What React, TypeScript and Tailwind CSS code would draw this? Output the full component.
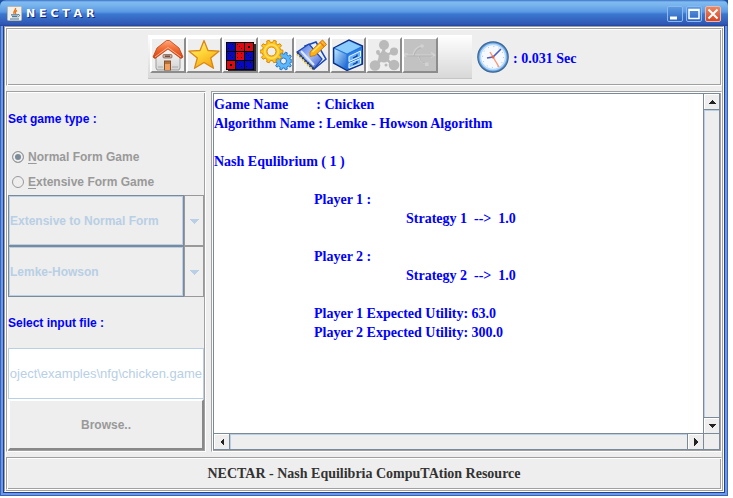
import type { ReactNode } from 'react';

const ETCHED =
  'border border-t-[#a0a0a0] border-l-[#a0a0a0] border-b-white border-r-white p-px shadow-[inset_1px_1px_0_#fff,inset_-1px_-1px_0_#a0a0a0]';
const SERIF = "font-['Liberation_Serif',serif] font-bold text-[14px] leading-[19px]";
const SANS = "font-['Liberation_Sans',sans-serif] text-[12px]";

function JavaIcon() {
  return (
    <svg width="16" height="16" viewBox="0 0 16 16" aria-hidden="true">
      <rect x="0.5" y="0.5" width="14" height="14" rx="1" fill="#f0f0ec" stroke="#b8b8b0" />
      <path d="M8.5 2C9.5 4 5.5 5 7 8M10 4.5C8 5.5 8 6.5 8.8 8" fill="none" stroke="#e8761e" strokeWidth="1.4" />
      <path d="M4 8.8h7M5 10.6h5M3 13h9" stroke="#4d7896" strokeWidth="1.2" />
      <path d="M11 8.6c2.5-.4 2 2-.6 2.4" fill="none" stroke="#4d7896" />
    </svg>
  );
}

function HomeIcon() {
  return (
    <svg width="32" height="32" viewBox="0 0 32 32" className="shrink-0" aria-hidden="true">
      <defs>
        <linearGradient id="roof" x1="0" y1="0" x2="0" y2="1">
          <stop offset="0" stopColor="#ffa87c" />
          <stop offset="0.4" stopColor="#f4743c" />
          <stop offset="1" stopColor="#d83c0c" />
        </linearGradient>
        <linearGradient id="wall" x1="0" y1="0" x2="0" y2="1">
          <stop offset="0" stopColor="#ffffff" />
          <stop offset="1" stopColor="#d4d4d4" />
        </linearGradient>
      </defs>
      <path d="M4 15 16 5l12 10v14l-1 2H5l-1-2z" fill="url(#wall)" stroke="#9c9c9c" />
      <path d="M14.500 1.500h3L27 9l4 9-2 1.500L16 10 3 19.500 1 18l4-9z" fill="url(#roof)" stroke="#b8400f" strokeWidth="0.8" />
      <path d="M3 18 16 8.500 29 18" fill="none" stroke="#ffc4a4" strokeWidth="0.8" />
      <rect x="11" y="15.500" width="9" height="3.500" rx="1" fill="#c9b0a0" stroke="#7c5544" strokeWidth="0.7" />
      <path d="M13 17.200h5" stroke="#5c3828" strokeWidth="1.2" />
      <rect x="12.500" y="22" width="6" height="9" fill="#b87035" stroke="#84512c" />
      <path d="M13 25h5v6h-5z" fill="#f0a060" />
      <path d="M6 28h5M20 28h6" stroke="#a8a8a8" />
    </svg>
  );
}

function StarIcon() {
  return (
    <svg width="32" height="32" viewBox="0 0 32 32" className="shrink-0" aria-hidden="true">
      <defs>
        <linearGradient id="star" x1="0" y1="0" x2="0.6" y2="1">
          <stop offset="0" stopColor="#fff6a0" />
          <stop offset="0.5" stopColor="#ffd83c" />
          <stop offset="1" stopColor="#f7a814" />
        </linearGradient>
      </defs>
      <path
        d="M16 1.500 20 11.500 31 12.200 22.700 19 25.500 29.300 16 23.500 6.500 29.300 9.300 19 1 12.200 12 11.500z"
        fill="url(#star)"
        stroke="#d98714"
        strokeWidth="1.3"
        strokeLinejoin="round"
      />
    </svg>
  );
}

const DICE = ['b2', 'r3', 'r1', 'b3', 'r4', 'b3', 'r1', 'b3', 'b2'];
const PIPS: Record<string, number[][]> = {
  '1': [[3, 3]],
  '2': [[5, 1], [1, 5]],
  '3': [[1, 1], [3, 3], [5, 5]],
  '4': [[1, 1], [5, 1], [1, 5], [5, 5]],
};

function DiceIcon() {
  return (
    <svg width="32" height="32" viewBox="0 0 32 32" shapeRendering="crispEdges" className="shrink-0" aria-hidden="true">
      <path d="M4 5h28v27H4z" fill="#2a2a2a" />
      <rect x="2" y="3" width="28" height="28" fill="#000" />
      {DICE.map((die, i) => (
        <g key={i} transform={`translate(${3 + (i % 3) * 9} ${4 + Math.floor(i / 3) * 9})`}>
          <rect width="8" height="8" fill={die[0] === 'b' ? '#0808c0' : '#e00810'} />
          {PIPS[die[1]].map(([x, y]) => (
            <rect key={`${x}-${y}`} x={x} y={y} width={die[1] === '1' ? 2 : 1} height={die[1] === '1' ? 2 : 1} fill="#000" />
          ))}
        </g>
      ))}
    </svg>
  );
}

function gearPath(cx: number, cy: number, outer: number, inner: number, teeth: number) {
  const points: string[] = [];
  for (let i = 0; i < teeth; i += 1) {
    [-0.3, -0.18, 0.18, 0.3].forEach((offset, k) => {
      const angle = ((i + offset) / teeth) * Math.PI * 2;
      const radius = k === 0 || k === 3 ? inner : outer;
      points.push(`${(cx + Math.cos(angle) * radius).toFixed(2)} ${(cy + Math.sin(angle) * radius).toFixed(2)}`);
    });
  }
  return `M${points.join('L')}z`;
}

function hole(cx: number, cy: number, r: number) {
  return `M${cx - r} ${cy}a${r} ${r} 0 1 0 ${2 * r} 0a${r} ${r} 0 1 0 ${-2 * r} 0z`;
}

function GearsIcon() {
  return (
    <svg width="32" height="32" viewBox="0 0 32 32" fillRule="evenodd" strokeLinejoin="round" className="shrink-0" aria-hidden="true">
      <path d={gearPath(23.5, 22, 9, 7, 10) + hole(23.5, 22, 3)} fill="#5cb8f8" stroke="#2878c8" />
      <path d={gearPath(11.5, 12.5, 11.5, 9.2, 10) + hole(11.5, 12.5, 4.5)} fill="#ffc41c" stroke="#d88a08" />
      <circle cx="11.5" cy="12.500" r="6.800" fill="none" stroke="#ffe068" strokeWidth="1.5" />
    </svg>
  );
}

function NotebookIcon() {
  return (
    <svg width="32" height="32" viewBox="0 0 32 32" className="shrink-0" aria-hidden="true">
      <defs>
        <linearGradient id="note" x1="0" y1="0" x2="1" y2="1">
          <stop offset="0" stopColor="#3c64d8" />
          <stop offset="0.5" stopColor="#a8c0fc" />
          <stop offset="1" stopColor="#2c50c0" />
        </linearGradient>
      </defs>
      <path d="M9 7 20 3l10 17-12 10z" fill="#e8f0ff" stroke="#1c48b4" strokeWidth="1.5" />
      <path d="M1 13 13 5l13 15-8 10z" fill="url(#note)" stroke="#1c44b0" strokeWidth="1.2" />
      <path d="m5 12 13 14" stroke="#dce8ff" strokeWidth="2" />
      <path d="m1.500 14 16 16" stroke="#3c3c30" strokeWidth="2.500" strokeDasharray="1.3 2.2" />
      <path d="m1 15.500 15 15" stroke="#f0cc30" strokeWidth="1.4" strokeDasharray="1.8 1.8" />
      <path d="m14 13 12.500-12 4 4.500-11.500 11-5 1z" fill="#ffb218" stroke="#c87c10" />
      <path d="m16.500 13 10-9.500" stroke="#ffe468" strokeWidth="1.5" />
      <path d="m24 3 4 4.500" stroke="#ec7820" strokeWidth="1.5" />
    </svg>
  );
}

function CabinetIcon() {
  return (
    <svg width="32" height="32" viewBox="0 0 32 32" className="shrink-0" aria-hidden="true">
      <defs>
        <linearGradient id="side" x1="0" y1="0" x2="1" y2="1">
          <stop offset="0" stopColor="#c0e8ff" />
          <stop offset="1" stopColor="#1662d0" />
        </linearGradient>
      </defs>
      <path d="m1.500 9 15.500-8 13.500 6v18L15 31.500 1.500 24z" fill="#2474e0" stroke="#0c2c80" strokeWidth="1.3" />
      <path d="m3 9 14-7 12 5.500-14 7z" fill="#8cccfc" />
      <path d="m2.500 10 12 5.500v14.500l-12-6.500z" fill="url(#side)" />
      <path d="m16 15.500 13.500-6.500v15L16 30z" fill="#2e80e4" />
      <path d="m17 17.500 11.500-5.500v5.500L17 22.500zM17 24.500l11.500-5v5L17 29z" fill="#68b0f8" stroke="#e8f6ff" />
      <path d="m21 19 4-2v-1.500M21 25.500l4-2V22" fill="none" stroke="#0c3c98" strokeWidth="1.300" />
    </svg>
  );
}

function MoleculeIcon() {
  return (
    <svg width="32" height="32" viewBox="0 0 32 32" fill="#bababa" className="shrink-0" aria-hidden="true">
      <path d="M16 7v11L7 27M16 18l10 9M16 18l10-6M16 18l-7-4" stroke="#bababa" strokeWidth="2.500" />
      <circle cx="16" cy="6" r="5" />
      <circle cx="26" cy="12.500" r="4" />
      <circle cx="16" cy="18" r="5.500" />
      <circle cx="7" cy="26.500" r="5.300" />
      <circle cx="26" cy="26" r="5.300" />
      <circle cx="10" cy="13" r="2" />
      <circle cx="18" cy="26" r="1.5" />
    </svg>
  );
}

function BranchIcon() {
  return (
    <svg width="34" height="34" viewBox="0 0 34 34" className="shrink-0" aria-hidden="true">
      <rect width="34" height="34" fill="#c2c2c2" />
      <g fill="none" stroke="#d4d4d4" strokeWidth="1.2">
        <path d="M2 17h29M28 14.500l4 2.500-4 2.500M10 17c1-5 4-8 8-9M15 17c2 6 4 8 8 9" />
        <circle cx="3" cy="17" r="1.5" />
      </g>
      <path d="M3 18h27M11 18c1-5 4-8 7-8M16 18c2 6 4 7 7 7" fill="none" stroke="#b4b4b4" />
      <circle cx="19" cy="8" r="1.800" fill="#d2d2d2" />
      <path d="M22 24.500h3.500V28H22z" fill="#d2d2d2" />
    </svg>
  );
}

function ClockIcon() {
  return (
    <svg width="32" height="32" viewBox="0 0 32 32" aria-hidden="true">
      <circle cx="16" cy="16" r="15.200" fill="#5a9ce0" stroke="#3f6690" strokeWidth="1.2" />
      <circle cx="16" cy="16" r="13.500" fill="#b4d8fa" />
      <circle cx="16" cy="16" r="11.800" fill="#f6faff" />
      <circle cx="16" cy="16" r="10.500" fill="none" stroke="#a8b8cc" strokeDasharray="1 4.500" />
      <path d="m13 11 9 15" stroke="#ff9470" strokeWidth="1.4" />
      <path d="m10 17 6-1 8-8" fill="none" stroke="#4a5cc0" strokeWidth="1.6" />
      <circle cx="16" cy="16" r="1.5" fill="#e06848" />
    </svg>
  );
}

function ToolButton({ label, disabled, children }: { label: string; disabled?: boolean; children: ReactNode }) {
  return (
    <button
      type="button"
      aria-label={label}
      disabled={disabled}
      className="flex h-[36px] w-[36px] items-center justify-center overflow-hidden border-2 border-t-white border-l-white border-r-[#8c8c8c] border-b-[#8c8c8c] bg-[#eee]"
    >
      {children}
    </button>
  );
}

function WindowButton({ label, danger, children }: { label: string; danger?: boolean; children: ReactNode }) {
  return (
    <button
      type="button"
      aria-label={label}
      className={`flex h-[16px] w-[16px] items-center justify-center rounded-[2px] border ${
        danger
          ? 'border-[#e8b8b4] bg-linear-to-b from-[#e88860] to-[#d84420]'
          : 'border-[#8cb8ee] bg-linear-to-b from-[#5c9ae0] to-[#2c62c0]'
      }`}
    >
      <svg width="12" height="12" viewBox="0 0 12 12" fill="none" stroke="#fff" strokeWidth="2" aria-hidden="true">
        {children}
      </svg>
    </button>
  );
}

function Arrow({ d, fill = '#222' }: { d: string; fill?: string }) {
  return (
    <svg width="10" height="10" viewBox="0 0 10 10" shapeRendering="crispEdges" aria-hidden="true">
      <path d={d} fill={fill} />
    </svg>
  );
}

function Combo({ label, value }: { label: string; value: string }) {
  return (
    <div className="flex border border-[#999]">
      <select
        aria-label={label}
        disabled
        className="-m-px min-w-0 flex-1 appearance-none border border-[#7a8a99] bg-[#eee] pl-px font-bold text-[#b8cfe5] opacity-100 shadow-[inset_0_0_0_1px_#b8cfe5]"
      >
        <option>{value}</option>
      </select>
      <span className="ml-px flex w-[19px] items-center justify-center border-l border-[#999]">
        <Arrow d="M0 3h10L5 8z" fill="#b8cfe5" />
      </span>
    </div>
  );
}

function GameTypeRadio({ label, checked }: { label: string; checked?: boolean }) {
  return (
    <label className="flex flex-1 items-center gap-[4px] pl-[4px] font-bold text-[#999]">
      <input
        type="radio"
        name="game-type"
        disabled
        defaultChecked={checked}
        className="h-[12px] w-[12px] appearance-none rounded-full border border-[#999] checked:bg-[#7a8a99] checked:shadow-[inset_0_0_0_2px_#eee]"
      />
      <span>
        <u className="underline-offset-2">{label[0]}</u>
        {label.slice(1)}
      </span>
    </label>
  );
}

const SCROLL_BUTTON = 'flex h-[15px] w-[15px] shrink-0 items-center justify-center bg-[#eee] shadow-[inset_1px_1px_0_#fff]';

export default function App() {
  return (
    <div className="flex min-h-screen bg-white pr-[5px] pb-[2px]">
      <div className="flex min-w-0 flex-1 flex-col bg-[#1c50a4]">
        <header className="z-10 flex h-[26px] shrink-0 items-center gap-[3px] rounded-t-[6px] bg-[linear-gradient(#3c70c8_0px,#80bcf0_2px,#78b4ec_5px,#5a98e4_12px,#3c78d0_14px,#2f58b4_24px,#2444a0_26px)] px-[7px] pt-[2px]">
          <JavaIcon />
          <h1 className="flex-1 font-['DejaVu_Sans',sans-serif] text-[11px] font-bold whitespace-pre text-white [text-shadow:1px_1px_0_#10288c]">
            N E C T A R
          </h1>
          <WindowButton label="Minimize">
            <path d="M1 10h7" strokeWidth="3" />
          </WindowButton>
          <WindowButton label="Maximize">
            <path d="M1 1.500h10v9H1z" strokeWidth="1.5" />
            <path d="M1 2h10" />
          </WindowButton>
          <WindowButton label="Close" danger>
            <path d="m1.500 1.500 9 9M10.500 1.500l-9 9" />
          </WindowButton>
        </header>

        <div className="mx-[4px] mb-[4px] flex flex-1 flex-col bg-[#eee] shadow-[0_0_0_1px_#1c3f9a,0_0_0_3px_#6f9ae0,0_0_0_4px_#3463c0]">
          <div className={`flex flex-1 flex-col gap-[5px] ${ETCHED}`}>
            <section className={`flex h-[58px] items-center justify-center gap-[5px] ${ETCHED}`}>
              <div
                role="toolbar"
                aria-label="Tools"
                className="flex h-[44px] w-[324px] items-start border-b border-[#c4c4c4] bg-linear-to-b from-white to-[#d8d8d8] px-[2px] pt-[2px]"
              >
                <ToolButton label="Home"><HomeIcon /></ToolButton>
                <ToolButton label="Favourites"><StarIcon /></ToolButton>
                <ToolButton label="Games"><DiceIcon /></ToolButton>
                <ToolButton label="Settings"><GearsIcon /></ToolButton>
                <ToolButton label="Edit"><NotebookIcon /></ToolButton>
                <ToolButton label="Files"><CabinetIcon /></ToolButton>
                <ToolButton label="Network" disabled><MoleculeIcon /></ToolButton>
                <ToolButton label="Tree" disabled><BranchIcon /></ToolButton>
              </div>
              <div className="flex items-center gap-[4px]">
                <ClockIcon />
                <span className={`min-w-[67px] pt-[2px] whitespace-nowrap text-[#0000ff] ${SERIF}`}>: 0.031 Sec</span>
              </div>
            </section>

            <div className="flex flex-1 gap-[5px]">
              <form className={`grid w-[200px] shrink-0 auto-rows-fr ${ETCHED} ${SANS}`}>
                <h2 className="flex items-center font-bold text-[#0000ff]">Set game type :</h2>
                <div className="flex flex-col">
                  <GameTypeRadio label="Normal Form Game" checked />
                  <GameTypeRadio label="Extensive Form Game" />
                </div>
                <Combo label="Conversion" value="Extensive to Normal Form" />
                <Combo label="Algorithm" value="Lemke-Howson" />
                <label htmlFor="input-file" className="flex items-center font-bold text-[#0000ff]">
                  Select input file :
                </label>
                <input
                  id="input-file"
                  dir="rtl"
                  disabled
                  defaultValue="Project\examples\nfg\chicken.game"
                  className="min-h-[51px] w-full min-w-0 border border-[#b8cfe5] bg-white px-px text-[13px] text-[#b8cfe5]"
                />
                <button
                  type="button"
                  disabled
                  className="border-2 border-t-white border-l-white border-r-[#888] border-b-[#888] bg-[#eee] font-bold text-[#999]"
                >
                  Browse..
                </button>
              </form>

              <section className={`flex min-w-0 flex-1 ${ETCHED}`}>
                <div className="flex min-w-0 flex-1 flex-col border border-[#7a8a99]">
                  <div className="flex flex-1">
                    <div className={`min-w-0 flex-1 overflow-hidden bg-white pt-px whitespace-pre text-[#0000ff] ${SERIF}`}>
                      <p>{'Game Name        : Chicken'}</p>
                      <p>Algorithm Name : Lemke - Howson Algorithm</p>
                      <p className="mt-[19px]">Nash Equlibrium ( 1 )</p>
                      <p className="mt-[19px] pl-[100px]">Player 1 :</p>
                      <p className="pl-[192px]">{'Strategy 1  -->  1.0'}</p>
                      <p className="mt-[19px] pl-[100px]">Player 2 :</p>
                      <p className="pl-[192px]">{'Strategy 2  -->  1.0'}</p>
                      <p className="mt-[19px] pl-[100px]">Player 1 Expected Utility: 63.0</p>
                      <p className="pl-[100px]">Player 2 Expected Utility: 300.0</p>
                    </div>
                    <div className="flex w-[16px] flex-col border-l border-[#7a8a99]">
                      <button type="button" aria-label="Scroll up" className={SCROLL_BUTTON}>
                        <Arrow d="M5 3 9 7H1z" />
                      </button>
                      <div className="flex-1 border-y border-[#7a8a99] shadow-[inset_1px_1px_0_#b8cfe5]" />
                      <button type="button" aria-label="Scroll down" className={SCROLL_BUTTON}>
                        <Arrow d="M1 3h8L5 7z" />
                      </button>
                    </div>
                  </div>
                  <div className="flex h-[16px] border-t border-[#7a8a99]">
                    <button type="button" aria-label="Scroll left" className={SCROLL_BUTTON}>
                      <Arrow d="M3 5 7 1v8z" />
                    </button>
                    <div className="flex-1 border-x border-[#7a8a99] shadow-[inset_1px_1px_0_#b8cfe5]" />
                    <button type="button" aria-label="Scroll right" className={SCROLL_BUTTON}>
                      <Arrow d="M3 1v8l4-4z" />
                    </button>
                    <span className="w-[16px] border-l border-[#7a8a99]" />
                  </div>
                </div>
              </section>
            </div>

            <footer className={`flex h-[33px] items-center justify-center text-[#333] ${ETCHED} ${SERIF}`}>
              NECTAR - Nash Equilibria CompuTAtion Resource
            </footer>
          </div>
        </div>
      </div>
    </div>
  );
}
